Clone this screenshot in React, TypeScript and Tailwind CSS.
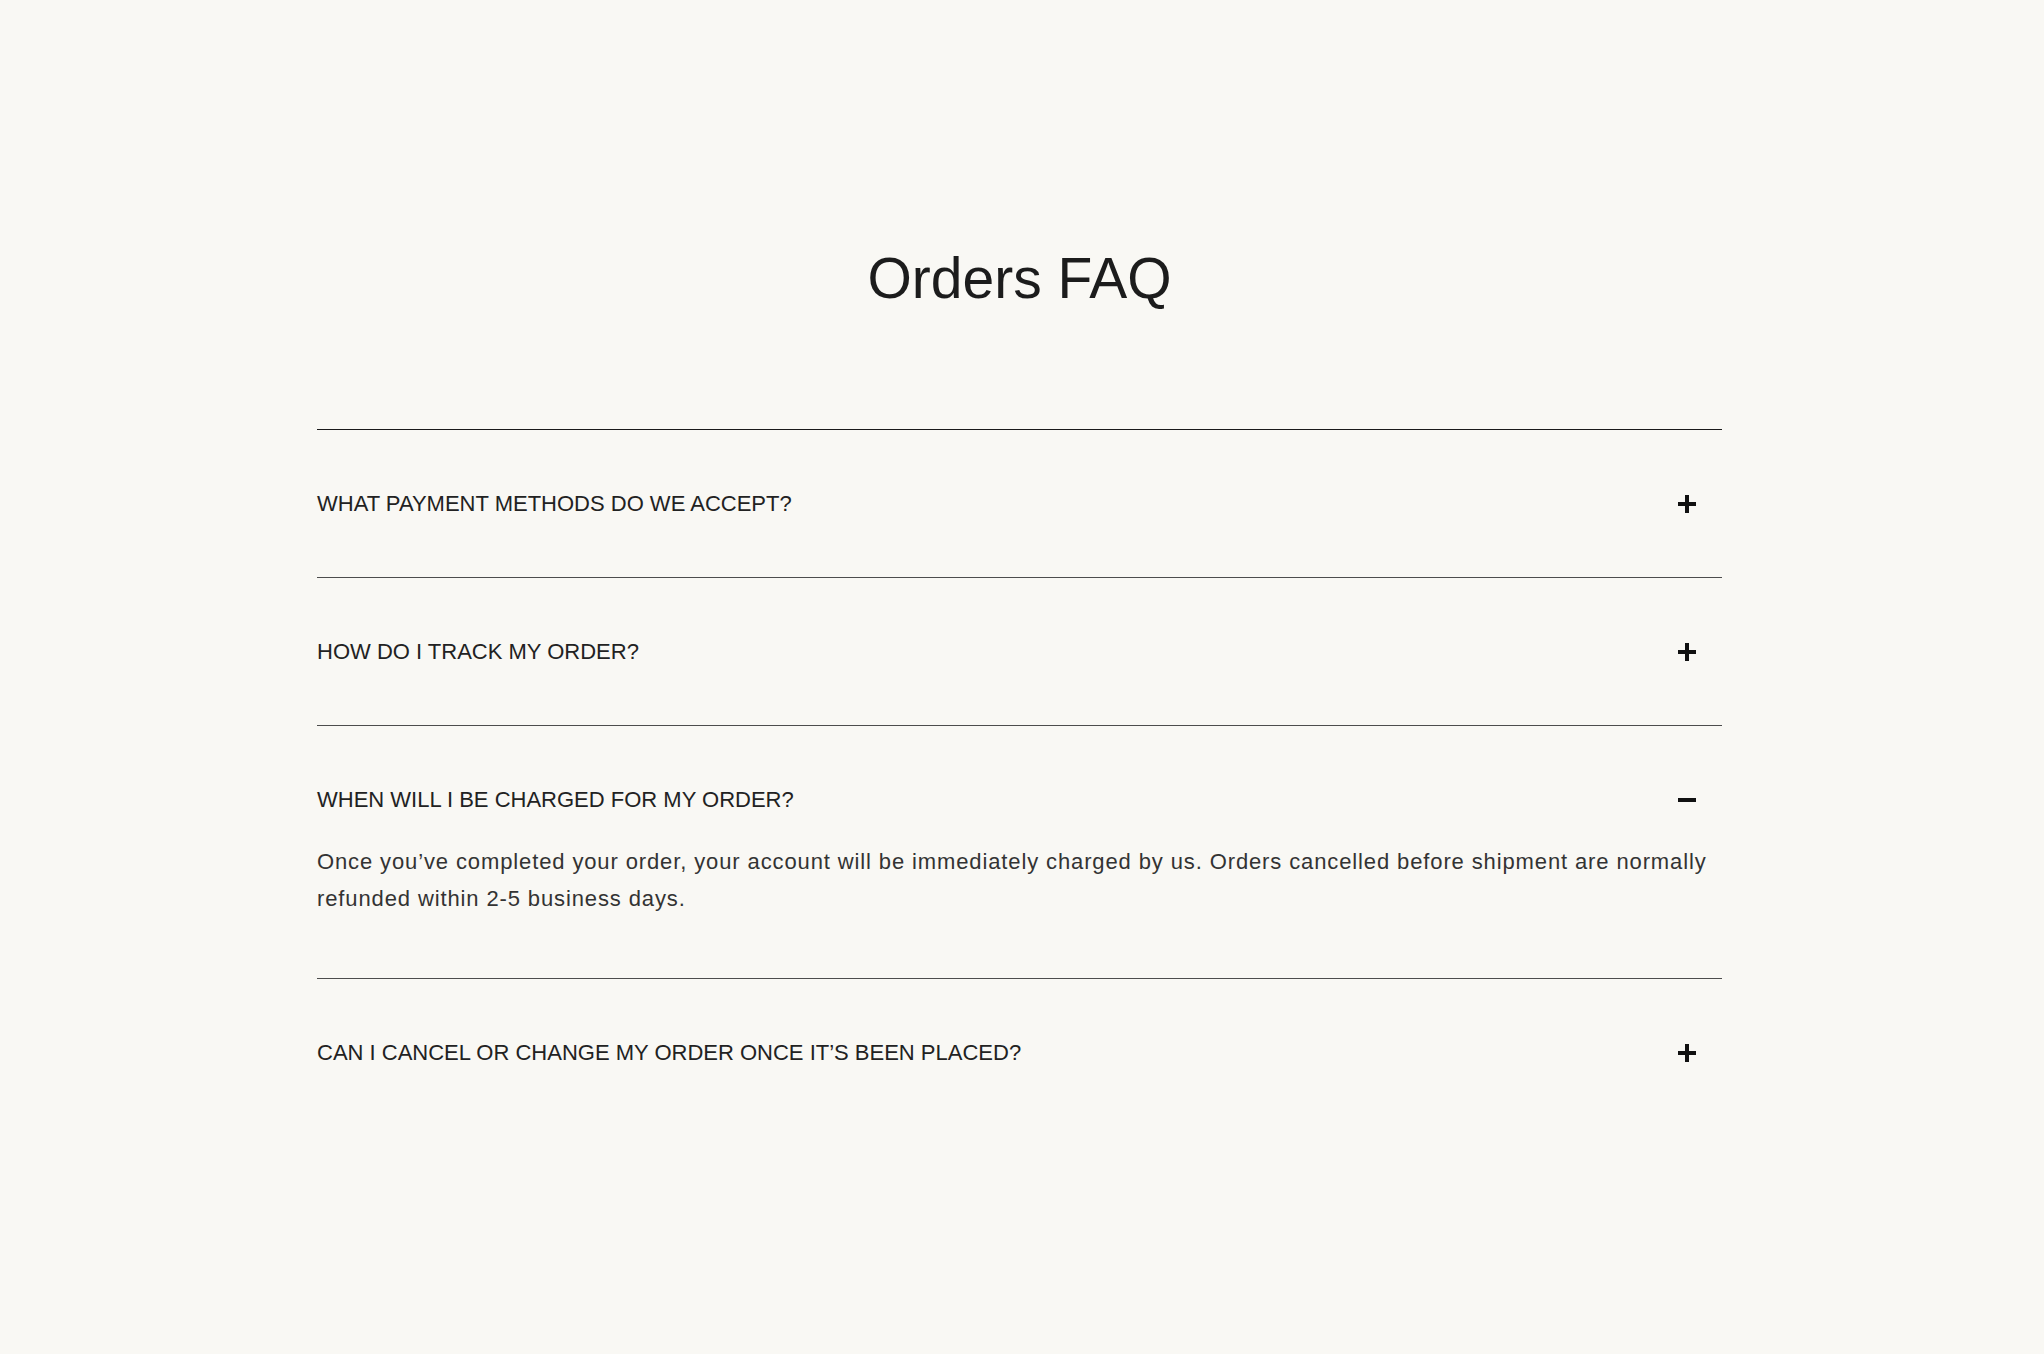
import { useState } from "react";

interface FaqItem {
    question: string;
    answer: string;
}

const faqs: FaqItem[] = [
    {
        question: "WHAT PAYMENT METHODS DO WE ACCEPT?",
        answer: "We accept all major credit and debit cards, PayPal, Apple Pay and Google Pay.",
    },
    {
        question: "HOW DO I TRACK MY ORDER?",
        answer: "Once your order ships you will receive an email with a tracking link.",
    },
    {
        question: "WHEN WILL I BE CHARGED FOR MY ORDER?",
        answer: "Once you\u2019ve completed your order, your account will be immediately charged by us. Orders cancelled before shipment are normally refunded within 2-5 business days.",
    },
    {
        question: "CAN I CANCEL OR CHANGE MY ORDER ONCE IT\u2019S BEEN PLACED?",
        answer: "Please contact us as soon as possible and we will do our best to update your order before it ships.",
    },
];

function Toggle({ open }: { open: boolean }) {
    return (
        <span className="relative mr-[26px] flex h-[18px] w-[18px] shrink-0 items-center justify-center">
            <span className="absolute h-[4px] w-[18px] bg-[#111]" />
            {!open && <span className="absolute h-[18px] w-[4px] bg-[#111]" />}
        </span>
    );
}

export default function App() {
    const [openIndex, setOpenIndex] = useState<number | null>(2);

    return (
        <div
            className="min-h-screen bg-[#f9f8f4] pl-[317px] pr-[322px] pt-[250px] text-[#1a1a1a]"
            style={{ fontFamily: '"Liberation Sans", Arial, sans-serif' }}
        >
            <h1 className="text-center text-[57px] font-light leading-none text-[#1c1c1c]">
                Orders FAQ
            </h1>

            <div className="mt-[122px]">
                {faqs.map((faq, i) => {
                    const open = openIndex === i;
                    return (
                        <div
                            key={faq.question}
                            className={
                                i === 0
                                    ? "border-t border-[#1a1a1a]"
                                    : "border-t border-[#4d4d4d]"
                            }
                        >
                            <button
                                className={
                                    open
                                        ? "flex w-full items-center justify-between pt-[58px] pb-[27px] text-left"
                                        : "flex w-full items-center justify-between pt-[58px] pb-[57px] text-left"
                                }
                                onClick={() => setOpenIndex(open ? null : i)}
                            >
                                <span className="text-[22px] leading-[32px] text-[#222]">
                                    {faq.question}
                                </span>
                                <Toggle open={open} />
                            </button>
                            {open && (
                                <p className="pr-[8px] pb-[61px] text-[22px] leading-[37px] tracking-[0.04em] text-[#333]">
                                    {faq.answer}
                                </p>
                            )}
                        </div>
                    );
                })}
            </div>
        </div>
    );
}
